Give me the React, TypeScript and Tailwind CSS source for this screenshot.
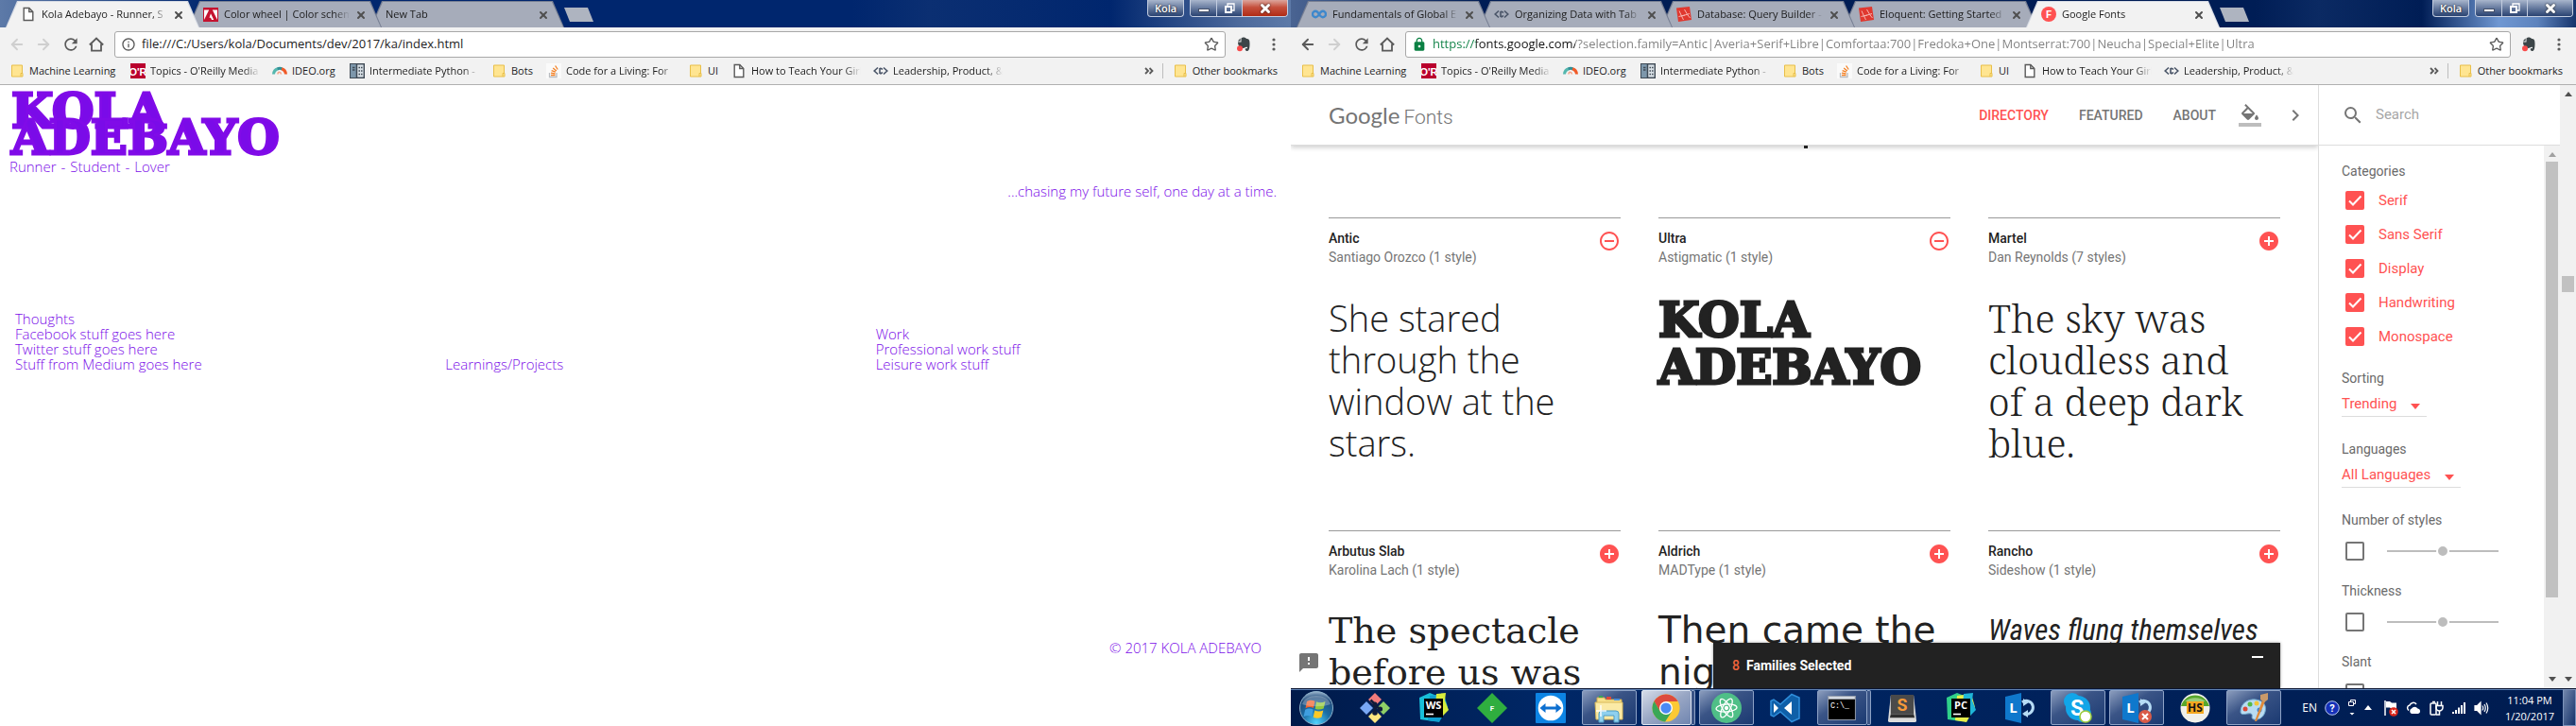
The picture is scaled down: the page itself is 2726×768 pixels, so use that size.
import type { ReactNode } from "react";
import { ArrowLeft, ArrowRight, Star, X } from "lucide-react";
import { MdAddCircle, MdChevronRight, MdFeedback, MdFormatColorFill, MdHttps, MdInfoOutline, MdRefresh, MdRemoveCircleOutline, MdSearch } from "react-icons/md";

/* ---------- favicons and small glyphs ---------- */

const PageIcon = () => (
  <svg viewBox="0 0 16 16" className="size-4 shrink-0" fill="#fff" stroke="#5a5a5a" strokeWidth="1.4">
    <path d="M3.2 1.5h5.6l4 4v9H3.2z" />
    <path d="M8.8 1.5v4h4" fill="none" />
  </svg>
);

const FolderIcon = () => (
  <svg viewBox="0 0 16 16" className="size-4 shrink-0">
    <path d="M2.5 2h11v8.500h.5v3.500H2.500z" fill="#ffe591" stroke="#e8bf4a" />
    <path d="M12 14v-3.500h2" fill="none" stroke="#e8bf4a" />
  </svg>
);

const AdobeIcon = () => (
  <svg viewBox="0 0 16 16" className="size-4 shrink-0">
    <rect width="16" height="16" y="1" fill="#c4122f" />
    <path d="M6.200 3.500H1V14zM9.800 3.500H15V14zM8 7.200l3.200 6.800H9l-1-2.200H6.500z" fill="#fff" />
  </svg>
);

const OreillyIcon = () => (
  <svg viewBox="0 0 16 16" className="size-4 shrink-0">
    <rect width="16" height="16" fill="#b9002d" />
    <text x="8" y="12.500" textAnchor="middle" fontFamily="Liberation Sans" fontSize="11" fontWeight="700" fill="#fff">O'R</text>
  </svg>
);

const IdeoIcon = () => (
  <svg viewBox="0 0 16 16" className="size-4 shrink-0" fill="none" strokeWidth="3">
    <path d="M1.500 11.500A6.500 6.500 0 0 1 6 5.700" stroke="#55b7ae" />
    <path d="M5.600 5.800A6.500 6.500 0 0 1 10.500 5.800" stroke="#2f8f96" />
    <path d="M10 5.700a6.500 6.500 0 0 1 4.500 5.800" stroke="#f05a28" />
    <path d="M6 11.500c0-3 3-3 3.500 0" stroke="#f6a489" strokeWidth="1.500" />
  </svg>
);

const LibraryIcon = () => (
  <svg viewBox="0 0 16 16" className="size-4 shrink-0">
    <rect x=".7" y=".7" width="14.600" height="14.600" fill="#d8e0e6" stroke="#3f4a55" strokeWidth="1.400" />
    <rect x="1" y="1" width="6" height="14" fill="#7d97ab" />
    <path d="M7.500 1v14M3 4.500h2.500M3 7h2.500M9.500 4.500h1.500M12 4.500h1.500M9.500 8h1.500M12 8h1.500M9.500 11.500h1.500M12 11.500h1.500" stroke="#3f4a55" strokeWidth="1.500" />
  </svg>
);

const StackIcon = () => (
  <svg viewBox="0 0 16 16" className="size-4 shrink-0" fill="none">
    <rect width="16" height="16" fill="#fafafa" />
    <path d="M3.500 10v4.500h7.500V10" stroke="#b9bcc0" strokeWidth="1.300" />
    <path d="M5 12.500h4.500M5 10.200l4.500.6M5.600 7.600l4.300 1.600M7.200 5l3.600 2.900M9.600 2.500l2.600 4" stroke="#f48024" strokeWidth="1.300" />
  </svg>
);

const CodeIcon = () => (
  <svg viewBox="0 0 16 16" className="size-4 shrink-0" fill="none" stroke="#4a5568" strokeWidth="1.600">
    <path d="M5 4.500 1.200 8 5 11.500M11 4.500 14.800 8 11 11.500" />
    <path d="M7 5v6M7 5.200q2.500 0 2.500 1.500M7 10.800q2.500 0 2.500-1.500" />
  </svg>
);

const InfinityIcon = () => (
  <svg viewBox="0 0 16 16" className="size-4 shrink-0" fill="none" stroke="#3e88cc" strokeWidth="2.400">
    <path d="M8 8C6.500 5.500 5.500 4.800 4.200 4.800a3.200 3.200 0 0 0 0 6.400C5.500 11.200 6.500 10.500 8 8s2.500-3.200 3.800-3.200a3.200 3.200 0 0 1 0 6.400C10.500 11.200 9.500 10.500 8 8z" />
  </svg>
);

const LaravelIcon = () => (
  <svg viewBox="0 0 16 16" className="size-4 shrink-0">
    <path d="M0 1.500 14 0l2 14L2 16z" fill="#e0382f" />
    <path d="M3 4.500 5.500 10 14 7.500M5.500 10l2 4M8.500 3l3.500 6 2.500 3M2.500 10.500 9 9" fill="none" stroke="#f6b3ae" />
  </svg>
);

const FontsIcon = () => (
  <svg viewBox="0 0 16 16" className="size-4 shrink-0">
    <circle cx="8" cy="8" r="8" fill="#ff5252" />
    <text x="8" y="12" textAnchor="middle" fontFamily="Roboto" fontSize="11" fontWeight="700" fill="#fff">F</text>
  </svg>
);

const HomeIcon = () => (
  <svg viewBox="0 0 18 18" className="size-[18px]" fill="none" stroke="#5a5a5a" strokeWidth="1.800">
    <path d="M1.800 9.500 9 2.500l7.200 7M4 8.500v7.200h10V8.500" />
  </svg>
);

const EvernoteIcon = () => (
  <svg viewBox="0 0 18 18" className="size-[18px]">
    <path d="M6.500 2.500C8 1 11 1.500 12 3c2.500.2 3.500 1 3.500 5 0 4-.5 8-2.500 8s-3-2-1.500-3l1.300.3c.6-1 .2-1.600-.8-1.600-1.500 0-2 1.300-3.500 1.300C5 13 3 10 3 6.500h3.500z" fill="#3c4548" />
    <path d="M2.800 5.500 5.600 2.600v2.900z" fill="#3c4548" />
    <circle cx="5" cy="13.200" r="3" fill="#f94a4a" />
  </svg>
);

const DotsIcon = () => (
  <svg viewBox="0 0 4 16" className="h-4 w-1" fill="#5a5a5a">
    <circle cx="2" cy="3" r="1.600" /><circle cx="2" cy="8" r="1.600" /><circle cx="2" cy="13" r="1.600" />
  </svg>
);

/* ---------- browser chrome ---------- */

type TabInfo = { title: string; icon?: ReactNode; active?: boolean };

function Tab({ tab, order }: { tab: TabInfo; order: number }) {
  return (
    <div
      className={
        "relative -ml-3 h-7 w-[205px] shrink-0 [clip-path:polygon(0_100%,12px_0,calc(100%_-_12px)_0,100%_100%)] " +
        (tab.active ? "bg-[#d5dae4]" : "bg-[#767e92]")
      }
      style={{ zIndex: tab.active ? 20 : order }}
    >
      <div
        className={
          "flex h-full items-center pr-[18px] pl-4 [clip-path:polygon(1px_100%,13px_1px,calc(100%_-_13px)_1px,calc(100%_-_1px)_100%)] " +
          (tab.active ? "bg-[#f2f2f2]" : "bg-[#a6acba]")
        }
      >
        {tab.icon && <span className="mr-1.5">{tab.icon}</span>}
        <span className="min-w-0 flex-1 overflow-hidden text-[11px] whitespace-nowrap text-[#1c1c1c] [mask-image:linear-gradient(to_right,black_88%,transparent)]">
          {tab.title}
        </span>
        <button aria-label={"Close " + tab.title} className="ml-1.5 grid size-[10px] place-items-center">
          <X className="size-3 shrink-0 text-[#505050]" strokeWidth={4} />
        </button>
      </div>
    </div>
  );
}

function WindowControls({ focused }: { focused: boolean }) {
  const glass = "bg-linear-to-b from-[#a9b6cc] via-[#6d80a3] via-45% to-[#2a4372] ";
  return (
    <div className="ml-auto flex h-[18px] gap-1.5 pr-[3px] text-white">
      <button className={"w-[39px] rounded-b-[4px] border border-t-0 border-[#c3cde0] text-[11px] leading-4 font-semibold [text-shadow:0_0_2px_#000] " + glass}>
        Kola
      </button>
      <div className="flex overflow-hidden rounded-b-[4px] border border-t-0 border-[#c3cde0]">
        <button aria-label="Minimize" className={"grid w-7 place-items-center border-r border-[#c3cde0] " + glass}>
          <span className="mt-1 h-1 w-3 border border-[#44506a] bg-white" />
        </button>
        <button aria-label="Restore" className={"grid w-[27px] place-items-center border-r border-[#c3cde0] " + glass}>
          <svg viewBox="0 0 12 12" className="size-3" fill="none" stroke="#fff" strokeWidth="2">
            <path d="M4 3V1h7v7H9" strokeWidth="1.300" /><path d="M2 4h6v6H2z" />
          </svg>
        </button>
        <button
          aria-label="Close"
          className={"grid w-[47px] place-items-center " + (focused ? "bg-linear-to-b from-[#dba59d] via-[#c5503d] via-45% to-[#b02a12]" : glass)}
        >
          <X className="size-[14px] text-white drop-shadow-[0_0_1px_#222]" strokeWidth={5} />
        </button>
      </div>
    </div>
  );
}

const bookmarks: { label: string; icon: ReactNode; width: string; fade?: boolean }[] = [
  { label: "Machine Learning", icon: <FolderIcon />, width: "w-[94px]" },
  { label: "Topics - O'Reilly Media", icon: <OreillyIcon />, width: "w-[116px]", fade: true },
  { label: "IDEO.org", icon: <IdeoIcon />, width: "w-12" },
  { label: "Intermediate Python - ", icon: <LibraryIcon />, width: "w-[116px]", fade: true },
  { label: "Bots", icon: <FolderIcon />, width: "w-6" },
  { label: "Code for a Living: For", icon: <StackIcon />, width: "w-[116px]", fade: true },
  { label: "UI", icon: <FolderIcon />, width: "w-3" },
  { label: "How to Teach Your Girl", icon: <PageIcon />, width: "w-[116px]", fade: true },
  { label: "Leadership, Product, &", icon: <CodeIcon />, width: "w-[116px]", fade: true },
];

type BrowserProps = {
  tabs: TabInfo[];
  focused: boolean;
  canGoBack?: boolean;
  secure?: boolean;
  url: string;
  titleBar: string;
  children: ReactNode;
};

function Browser({ tabs, focused, canGoBack, secure, url, titleBar, children }: BrowserProps) {
  return (
    <section className="flex min-h-0 flex-1 flex-col font-['Open_Sans','Noto_Sans',sans-serif]">
      <div className={"flex h-[29px] shrink-0 pl-[18px] " + titleBar}>
        <div className="isolate mt-px flex">
          {tabs.map((t, i) => <Tab key={t.title} tab={t} order={tabs.length - i} />)}
          <button aria-label="New tab" className="mt-[7px] h-[15px] w-[31px] bg-[#aeb4c0] [clip-path:polygon(0_0,25px_0,100%_100%,6px_100%)]" />
        </div>
        <WindowControls focused={focused} />
      </div>

      <div className="flex h-8 shrink-0 items-center bg-[#f2f2f2] pt-1 pl-[9px] text-[#5a5a5a]">
        <button aria-label="Back" className={"grid w-7 justify-start " + (canGoBack ? "" : "text-[#cfcfcf]")}><ArrowLeft className="size-[18px]" strokeWidth={2.500} /></button>
        <button aria-label="Forward" className="grid w-7 justify-start text-[#cfcfcf]"><ArrowRight className="size-[18px]" strokeWidth={2.500} /></button>
        <button aria-label="Reload" className="grid w-7 justify-start"><MdRefresh className="size-5" /></button>
        <button aria-label="Home" className="grid w-7 justify-start"><HomeIcon /></button>
        <label className="flex h-7 min-w-0 flex-1 items-center rounded-[3px] border border-[#a8a8a8] bg-white px-[6px]">
          {secure ? <MdHttps className="size-4 shrink-0 text-[#0b8043]" /> : <MdInfoOutline className="size-4 shrink-0" />}
          <input
            aria-label="Address"
            defaultValue={url}
            className={
              "ml-1.5 min-w-0 flex-1 text-[13px] outline-none " +
              (secure
                ? "bg-[linear-gradient(to_right,#0b8043_0_46px,#111_46px_151px,#808080_151px)] bg-clip-text text-transparent"
                : "text-[#1c1c1c]")
            }
          />
          <Star className="size-4 shrink-0" />
        </label>
        <button aria-label="Evernote" className="ml-[10px]"><EvernoteIcon /></button>
        <button aria-label="Menu" className="mr-4 ml-[21px]"><DotsIcon /></button>
      </div>

      <nav aria-label="Bookmarks" className="flex h-[29px] shrink-0 items-center gap-[13px] border-b border-[#b0b0b0] bg-[#f2f2f2] pr-[14px] pl-[10px] text-[11px] text-[#1c1c1c]">
        {bookmarks.map((b) => (
          <a key={b.label} href="#" className="flex shrink-0 items-center gap-[5px]">
            {b.icon}
            <span className={"overflow-hidden whitespace-nowrap " + b.width + (b.fade ? " [mask-image:linear-gradient(to_right,black_85%,transparent)]" : "")}>
              {b.label}
            </span>
          </a>
        ))}
        <button aria-label="More bookmarks" className="ml-auto">
          <svg viewBox="0 0 10 10" className="size-[10px]" fill="none" stroke="#5a5a5a" strokeWidth="1.800"><path d="m1 2 3 3-3 3M5.500 2l3 3-3 3" /></svg>
        </button>
        <a href="#" className="-ml-1 flex items-center gap-[5px] border-l border-[#bdbdbd] pl-[10px] whitespace-nowrap"><FolderIcon />Other bookmarks</a>
      </nav>
      {children}
    </section>
  );
}

/* ---------- personal site ---------- */

function PersonalSite() {
  return (
    <main className="flex flex-1 flex-col bg-white pt-[13px] text-[15px] leading-4 font-light text-[#7a0be8]">
      <h1 className="ml-3 w-min font-['DejaVu_Serif',serif] text-[51px] leading-7 font-bold [-webkit-text-stroke:3px_#800be8]">KOLA ADEBAYO</h1>
      <p className="mt-[9px] ml-[10px]">{"Runner\u2004-\u2004Student\u2004-\u2004Lover"}</p>
      <p className="mt-[10px] mr-[15px] text-right">...chasing my future self, one day at a time.</p>
      <div className="mt-[119px] grid grid-cols-3 items-end">
        <section className="pl-4"><h2>Thoughts</h2><p>Facebook stuff goes here</p><p>Twitter stuff goes here</p><p>Stuff from Medium goes here</p></section>
        <section className="pl-4"><h2>Learnings/Projects</h2></section>
        <section className="pl-4"><h2>Work</h2><p>Professional work stuff</p><p>Leisure work stuff</p></section>
      </div>
      <footer className="mt-auto mr-[31px] pb-[75px] text-right">© 2017 KOLA ADEBAYO</footer>
    </main>
  );
}

/* ---------- font directory ---------- */

const fonts = [
  { name: "Antic", by: "Santiago Orozco (1 style)", text: "She stared through the window at the stars.", style: "font-['Open_Sans',sans-serif] text-[38px] leading-11 font-light", picked: true },
  { name: "Ultra", by: "Astigmatic (1 style)", text: "KOLA ADEBAYO", style: "font-['DejaVu_Serif',serif] text-[50px] leading-[50px] font-bold [-webkit-text-stroke:3px_#222]", picked: true },
  { name: "Martel", by: "Dan Reynolds (7 styles)", text: "The sky was cloudless and of a deep dark blue.", style: "pr-5 font-['Noto_Serif','DejaVu_Serif',serif] text-[41px] leading-11 font-light" },
  { name: "Arbutus Slab", by: "Karolina Lach (1 style)", text: "The spectacle before us was", style: "font-['DejaVu_Serif',serif] text-[38px] leading-11" },
  { name: "Aldrich", by: "MADType (1 style)", text: "Then came the night", style: "font-['DejaVu_Sans',sans-serif] text-[39px] leading-11" },
  { name: "Rancho", by: "Sideshow (1 style)", text: "Waves flung themselves", style: "font-['Roboto_Condensed','Open_Sans_Condensed',sans-serif] text-[31px] leading-11 italic" },
];

const heading = "text-sm leading-5 font-normal text-[#6a6a6a]";

function Filter({ label }: { label: string }) {
  return (
    <fieldset className="h-[75px] shrink-0">
      <legend className={heading}>{label}</legend>
      <div className="flex items-center pt-[13px] pl-1">
        <input type="checkbox" aria-label={"Filter by " + label} className="size-5 appearance-none rounded-[2px] border-2 border-[#757575] bg-white" />
        <input
          type="range"
          aria-label={label}
          className="ml-6 h-3 w-[118px] appearance-none bg-[linear-gradient(#bdbdbd,#bdbdbd)] bg-[length:100%_2px] bg-center bg-no-repeat [&::-webkit-slider-thumb]:size-[14px] [&::-webkit-slider-thumb]:appearance-none [&::-webkit-slider-thumb]:rounded-full [&::-webkit-slider-thumb]:border-2 [&::-webkit-slider-thumb]:border-white [&::-webkit-slider-thumb]:bg-[#bdbdbd]"
        />
      </div>
    </fieldset>
  );
}

function Picker({ label, value, width }: { label: string; value: string; width: string }) {
  return (
    <label className="block h-[75px] shrink-0">
      <span className={"block " + heading}>{label}</span>
      <span className={"relative mt-[5px] block border-b border-[#dcdcdc] " + width}>
        <select className="h-[25px] w-full appearance-none text-[15px] text-[#ff5252]"><option>{value}</option></select>
        <svg viewBox="0 0 10 6" className="pointer-events-none absolute top-3 right-[7px] h-[6px] w-[10px]"><path d="M0 0h10L5 6z" fill="#ff5252" /></svg>
      </span>
    </label>
  );
}

const Arrow = ({ down, className }: { down?: boolean; className: string }) => (
  <svg viewBox="0 0 8 5" className={"h-[5px] w-2 " + className} fill="currentColor"><path d={down ? "M0 0h8L4 5z" : "M0 5h8L4 0z"} /></svg>
);

function FontDirectory() {
  return (
    <div className="flex min-h-0 flex-1 bg-white font-['Roboto',sans-serif]">
      <main className="relative min-w-0 flex-1 overflow-hidden">
        <header className="flex h-16 items-center border-b border-[#ddd] pr-3 pl-10 text-sm font-medium text-[#757575] shadow-[0_2px_5px_rgba(0,0,0,0.2)]">
          <a href="#" className="flex items-baseline gap-1 font-['Lato',sans-serif] text-2xl">
            <span className="font-normal">Google</span>
            <span className="font-['Roboto',sans-serif] text-[21px] font-light">Fonts</span>
          </a>
          <nav className="ml-auto flex items-center gap-8">
            <a href="#" className="text-[#ff5252]">DIRECTORY</a>
            <a href="#">FEATURED</a>
            <a href="#">ABOUT</a>
          </nav>
          <button aria-label="Background colour" className="ml-6">
            <svg viewBox="0 0 24 24" className="size-6">
              <MdFormatColorFill size={24} />
              <path d="M0 20h24v4H0z" fill="#bdbdbd" />
            </svg>
          </button>
          <button aria-label="More" className="ml-6"><MdChevronRight className="size-6" /></button>
        </header>
        <span className="absolute top-16 left-[543px] h-[3px] w-1 bg-[#222]" />
        <div className="grid grid-cols-3 gap-x-10 px-10 pt-[76px]">
          {fonts.map((f) => (
            <article key={f.name} className="h-[331px] border-t border-[#999] pt-[11px] text-[#222]">
              <div className="flex items-start justify-between text-sm leading-5">
                <div>
                  <h2 className="font-medium">{f.name}</h2>
                  <p className="text-[#757575]">{f.by}</p>
                </div>
                <button aria-label={(f.picked ? "Remove " : "Add ") + f.name} className="mt-px text-[#ff5252]">
                  {f.picked ? <MdRemoveCircleOutline className="size-6" /> : <MdAddCircle className="size-6" />}
                </button>
              </div>
              <p className={"mt-8 " + f.style}>{f.text}</p>
            </article>
          ))}
        </div>
        <button aria-label="Send feedback" className="absolute bottom-[15px] left-[7px] text-[#757575]"><MdFeedback className="size-6" /></button>
        <div className="absolute right-10 bottom-0 flex h-12 w-[600px] gap-[7px] bg-[#222] pl-5 text-sm leading-12 font-bold text-white shadow-[0_0_3px_rgba(0,0,0,0.4)]">
          <span className="font-medium text-[#f0643c]">8</span> Families Selected
          <button aria-label="Minimize" className="mt-[14px] mr-[18px] ml-auto h-[2px] w-3 bg-white" />
        </div>
      </main>

      <aside className="flex w-[256px] shrink-0 flex-col border-l border-[#ddd]">
        <label className="flex h-16 shrink-0 items-center border-b border-[#ddd] pl-6 text-[#757575]">
          <MdSearch className="size-6" />
          <input placeholder="Search" aria-label="Search" className="ml-3 w-40 text-[15px] outline-none placeholder:text-[#a6a6a6]" />
        </label>
        <div className="flex min-h-0 flex-1">
          <div className="flex min-w-0 flex-1 flex-col overflow-hidden pt-[17px] pl-6">
            <h2 className={heading}>Categories</h2>
            <ul className="mt-[3px] mb-4">
              {["Serif", "Sans Serif", "Display", "Handwriting", "Monospace"].map((c) => (
                <li key={c}>
                  <label className="relative flex h-9 items-center pl-1 text-[15px] text-[#ff5252]">
                    <input type="checkbox" defaultChecked className="mr-[15px] size-5 appearance-none rounded-[2px] bg-[#ff5252]" />
                    <svg viewBox="0 0 20 20" className="pointer-events-none absolute left-1 size-5" fill="none" stroke="#fff" strokeWidth="2"><path d="m4 10.500 4 4 8.500-9" /></svg>
                    {c}
                  </label>
                </li>
              ))}
            </ul>
            <Picker label="Sorting" value="Trending" width="w-[90px]" />
            <Picker label="Languages" value="All Languages" width="w-[126px]" />
            <Filter label="Number of styles" />
            <Filter label="Thickness" />
            <Filter label="Slant" />
          </div>
          <div className="flex w-[17px] flex-col items-center justify-between bg-[#f1f1f1] pt-[7px] pb-[7px]">
            <Arrow className="shrink-0 text-[#a0a0a0]" />
            <div className="mt-[5px] mb-auto h-[461px] w-[13px] shrink-0 bg-[#c1c1c1]" />
            <Arrow down className="text-[#505050]" />
          </div>
        </div>
      </aside>
      <div className="flex w-[17px] shrink-0 flex-col items-center bg-[#f1f1f1] py-[7px]">
        <Arrow className="text-[#505050]" />
        <div className="mt-[190px] h-[17px] w-[13px] bg-[#c1c1c1]" />
        <Arrow down className="mt-auto text-[#505050]" />
      </div>
    </div>
  );
}

/* ---------- taskbar ---------- */

const Orb = () => (
  <svg viewBox="0 0 38 38" className="size-[38px]">
    <defs>
      <radialGradient id="orb" cx=".5" cy=".95" r=".95"><stop offset="0" stopColor="#4fd4ff" /><stop offset=".45" stopColor="#1b6ea6" /><stop offset=".8" stopColor="#1f4c7c" /><stop offset="1" stopColor="#9fb8cf" /></radialGradient>
    </defs>
    <circle cx="19" cy="19" r="17.500" fill="url(#orb)" stroke="#8fb3cc" />
    <path d="M9 12c3-2 6-1.500 8.500-.3L16 19c-2.500-1.300-5.500-1.500-8.500.2z" fill="#f0622d" />
    <path d="M19 12.300c3 1.400 6 1.400 9.500-.3L26.700 19.500c-3 1.400-6 1.400-9 .2z" fill="#93c83e" />
    <path d="M7.200 20.700c3-1.500 6-1.500 8.500 0L14 28c-2.500-1.400-5.500-1.400-8.500.2z" fill="#3f9fe0" />
    <path d="M17.300 21.400c3 1.400 6 1.400 9 0L24.500 28.700c-3 1.400-6 1.400-8.800 0z" fill="#fcc927" />
    <path d="M4 15C7 3 31 3 34 15c-8 3-22 3-30 0z" fill="#fff" opacity=".28" />
  </svg>
);

const Git = () => (
  <svg viewBox="0 0 32 32" className="size-8">
    <path d="m16 0 7 7-7 7-7-7z" fill="#f27b7b" /><path d="m7 9 7 7-7 7-7-7z" fill="#79a8f5" />
    <path d="m25 9 7 7-7 7-7-7z" fill="#8fd067" /><path d="m16 18 7 7-7 7-7-7z" fill="#ffe680" />
    <path d="M11.500 7.500 16 12v9M16 13l5 4" stroke="#101c3a" strokeWidth="2.500" fill="none" />
    <circle cx="16" cy="12" r="2.500" fill="#101c3a" /><circle cx="16" cy="21" r="2.800" fill="#101c3a" /><circle cx="21.500" cy="17" r="2.600" fill="#101c3a" />
  </svg>
);

const JetBrains = ({ name, a, b, c }: { name: string; a: string; b: string; c: string }) => (
  <svg viewBox="0 0 32 32" className="size-8">
    <path d="M1 5 12 0l10 4-6 26-14-2z" fill={a} /><path d="M12 3 27 1l4 14-9 16-12-2z" fill={b} />
    <path d="m19 1 10-1-1 8 4 10-6 6-8-10z" fill={c} />
    <rect x="6" y="6" width="20" height="20" fill="#000" />
    <text x="16" y="16.500" textAnchor="middle" fontFamily="Open Sans" fontWeight="700" fontSize="11" fill="#fff">{name}</text>
    <path d="M8 22.500h8" stroke="#fff" strokeWidth="1.600" />
  </svg>
);

const Diamond = () => (
  <svg viewBox="0 0 32 32" className="size-8">
    <path d="m16 0 16 16-16 16L0 16z" fill="#2fae3f" />
    <text x="16" y="19" textAnchor="middle" fontFamily="Roboto" fontWeight="700" fontSize="8" fill="#fff">F</text>
  </svg>
);

const TeamViewer = () => (
  <svg viewBox="0 0 32 32" className="size-8">
    <rect width="32" height="32" rx="1" fill="#0c84e4" /><circle cx="16" cy="16" r="13.300" fill="#fff" />
    <path d="m4.500 16 6-5v3.500h11V11l6 5-6 5v-3.500h-11V21z" fill="#0c6fd0" />
  </svg>
);

const Explorer = () => (
  <svg viewBox="0 0 34 32" className="h-8 w-[34px]">
    <path d="M4 5h8l1 2h17v20H4z" fill="#f7e08a" stroke="#c9a94c" />
    <path d="M2 10h29v18H3z" fill="#fbeaa6" stroke="#d8b95a" />
    <path d="M6 3h4v2H6z" fill="#3aa655" /><path d="M14 4h5v3h-5z" fill="#e04b3a" /><path d="M22 6h6v2h-6z" fill="#4b8fd8" />
    <path d="M6 31V22q0-3 3-3h15q3 0 3 3v9h-5v-7H11v7z" fill="#8fd0ee" stroke="#4c9cc4" />
    <path d="M8 13v12M3 19h11" stroke="#fff" strokeWidth="1.500" opacity=".9" />
  </svg>
);

const Chrome = () => (
  <svg viewBox="0 0 32 32" className="size-[30px]">
    <circle cx="16" cy="16" r="15.500" fill="#fcc934" />
    <path d="M2.600 8.200A15.500 15.500 0 0 1 29.400 8.500H16L9.300 20z" fill="#dd4b3e" />
    <path d="M2.600 8.200A15.500 15.500 0 0 0 15 31.500L22.500 20 16 23.500 9.500 20z" fill="#3aa757" />
    <circle cx="16" cy="16" r="7.500" fill="#fff" /><circle cx="16" cy="16" r="6" fill="#4a8af4" />
  </svg>
);

const Atom = () => (
  <svg viewBox="0 0 32 32" className="size-8" fill="none" stroke="#fff" strokeWidth="1.300">
    <circle cx="16" cy="16" r="16" fill="#4fbf87" stroke="none" />
    <ellipse cx="16" cy="16" rx="4" ry="11" transform="rotate(28 16 16)" /><ellipse cx="16" cy="16" rx="4" ry="11" transform="rotate(-32 16 16)" />
    <ellipse cx="16" cy="16" rx="4" ry="11" transform="rotate(86 16 16)" /><circle cx="16" cy="16" r="1.500" fill="#fff" />
  </svg>
);

const VsCode = () => (
  <svg viewBox="0 0 32 32" className="size-8">
    <path d="M23 1.500 31 5v22l-8 3.500L11 20l-7 5-3-1.500v-15L4 7l7 5z" fill="#0f5fa8" stroke="#2f8fdc" strokeWidth="1.500" />
    <path d="m23 9-8 7 8 7zM4 11v10l5-5z" fill="#fff" />
  </svg>
);

const Terminal = () => (
  <svg viewBox="0 0 32 28" className="h-[26px] w-[30px]">
    <rect x=".5" y=".5" width="31" height="27" fill="#000" stroke="#9aa3b3" /><rect x="1" y="1" width="30" height="3" fill="#d5dae2" />
    <text x="3" y="14" fontFamily="Liberation Mono" fontSize="9" fill="#fff">C:\_</text>
  </svg>
);

const Sublime = () => (
  <svg viewBox="0 0 32 32" className="size-[30px]">
    <path d="M3 2h26l3 28q0 2-2 2H2q-2 0-2-2z" fill="#dcdcdc" /><path d="M3 1h26v22H3z" fill="#4a4a4a" /><path d="M3 23h26l1 4H2z" fill="#2f2f2f" />
    <text x="16" y="19" textAnchor="middle" fontFamily="Roboto" fontWeight="700" fontSize="19" fill="#f79a3a">S</text>
  </svg>
);

const Lync = ({ blocked }: { blocked?: boolean }) => (
  <svg viewBox="0 0 34 32" className="h-8 w-[34px]">
    <path d="M20 10a7 7 0 1 1 2 12" fill="none" stroke="#b7dcf5" strokeWidth="3" /><path d="m21 6 6 4-6 4zM26 18v8l-6-4z" fill="#b7dcf5" />
    <path d="M2 4 19 0v32L2 28z" fill="#0f78cc" />
    <text x="10.500" y="21" textAnchor="middle" fontFamily="Open Sans" fontWeight="700" fontSize="15" fill="#fff">L</text>
    {blocked && (<><circle cx="26" cy="25" r="7" fill="#d95b48" /><path d="m23 22 6 6m0-6-6 6" stroke="#fff" strokeWidth="2" /></>)}
  </svg>
);

const Skype = () => (
  <svg viewBox="0 0 32 32" className="size-8">
    <circle cx="10" cy="9" r="9" fill="#12a5e8" /><circle cx="16" cy="16" r="13" fill="#12a5e8" /><circle cx="21" cy="22" r="9" fill="#12a5e8" />
    <text x="15" y="24" textAnchor="middle" fontFamily="Roboto" fontWeight="700" fontSize="23" fill="#fff">S</text>
    <circle cx="24" cy="25" r="6" fill="#fff" stroke="#9ccb3c" strokeWidth="1.600" />
  </svg>
);

const HeidiSql = () => (
  <svg viewBox="0 0 32 32" className="size-8">
    <circle cx="16" cy="16" r="15.500" fill="#f0f0ea" /><path d="M1 14a15.500 15.500 0 0 1 30 0z" fill="#58a72c" /><path d="M5 9a14 10 0 0 1 22 0z" fill="#c6e6ae" opacity=".6" />
    <rect x="7" y="9" width="18" height="13" fill="#f5a81f" />
    <text x="16" y="20" textAnchor="middle" fontFamily="Open Sans" fontWeight="700" fontSize="12" fill="#141414">HS</text>
  </svg>
);

const Paint = () => (
  <svg viewBox="0 0 32 32" className="size-8">
    <path d="M2 20C2 11 10 6 18 7c8 1 12 6 10 13s-8 9-12 8 0-5-3-6-11 3-11-2z" fill="#b9dcf2" stroke="#6da4cb" />
    <circle cx="7" cy="17" r="2.500" fill="#d94a3a" /><circle cx="12" cy="12" r="2.500" fill="#54b948" /><circle cx="19" cy="11" r="2.500" fill="#f3c63a" /><circle cx="22" cy="18" r="2.500" fill="#3b82d0" />
    <path d="m17 30 8-22 3 1-9 21z" fill="#e08a3a" /><path d="m23 2 8-2 0 7-4 3-4-3z" fill="#c99a6a" />
  </svg>
);

const apps: { name: string; icon: ReactNode; open?: boolean; front?: boolean; stacked?: boolean }[] = [
  { name: "Git", icon: <Git /> },
  { name: "WebStorm", icon: <JetBrains name="WS" a="#18bfd8" b="#0f9fd0" c="#d8ec3c" /> },
  { name: "Fiddler", icon: <Diamond /> },
  { name: "TeamViewer", icon: <TeamViewer /> },
  { name: "Explorer", icon: <Explorer />, open: true },
  { name: "Chrome", icon: <Chrome />, open: true, front: true, stacked: true },
  { name: "Atom", icon: <Atom />, open: true },
  { name: "Visual Studio Code", icon: <VsCode /> },
  { name: "Command Prompt", icon: <Terminal />, open: true, stacked: true },
  { name: "Sublime Text", icon: <Sublime /> },
  { name: "PyCharm", icon: <JetBrains name="PC" a="#2fd08a" b="#e6ee4a" c="#1fb6d8" /> },
  { name: "Lync", icon: <Lync /> },
  { name: "Skype", icon: <Skype />, open: true },
  { name: "Lync, signed out", icon: <Lync blocked />, open: true },
  { name: "HeidiSQL", icon: <HeidiSql /> },
  { name: "Paint", icon: <Paint />, open: true },
];

function Taskbar() {
  return (
    <footer className="flex h-10 shrink-0 items-stretch border-t border-[#0a1430] bg-linear-to-r from-[#001a4a] via-[#002766] via-20% to-[#001c50] font-['Open_Sans',sans-serif] text-white shadow-[inset_0_1px_0_#5f82b5]">
      <button aria-label="Start" className="grid w-[58px] place-items-center pr-1"><Orb /></button>
      {apps.map((a) => (
        <div key={a.name} className="flex w-[62px] items-stretch justify-center pt-px pb-px">
          <button
            aria-label={a.name}
            className={
              "grid place-items-center rounded-[2px] " +
              (a.stacked ? "w-[53px] " : "w-[58px] ") +
              (a.front
                ? "border border-[#dfe6f2] bg-linear-to-br from-[#d5dbe8] via-[#98a6c4] to-[#7186b0]"
                : a.open
                  ? "border border-[#8ea3c6] bg-linear-to-br from-[#8c9dbd] via-[#3a5486] via-40% to-[#1b3a72]"
                  : "")
            }
          >
            {a.icon}
          </button>
          {a.stacked && <span className="w-1 rounded-r-[2px] border border-l-0 border-[#8ea3c6] bg-[#3a5486]" />}
        </div>
      ))}
      <div className="ml-auto flex items-center gap-2">
        <span className="text-xs">EN</span>
        <svg viewBox="0 0 16 16" className="size-4"><circle cx="8" cy="8" r="7.300" fill="#1530b8" stroke="#b9c8f0" /><text x="8" y="12" textAnchor="middle" fontFamily="Roboto" fontWeight="700" fontSize="11" fill="#fff">?</text></svg>
        <svg viewBox="0 0 10 20" className="h-5 w-[10px]" fill="none" stroke="#fff"><path d="M3.500 3V1.500h5v4H7M1.500 3.500h5v4h-5z" /><path d="M2.500 15h5L5 17.500z" fill="#fff" stroke="none" /></svg>
        <Arrow className="mr-1" />
        <svg viewBox="0 0 16 18" className="h-[18px] w-4"><path d="M2 1v16" stroke="#fff" strokeWidth="1.500" /><path d="M3 2h4l2 1.500h5V10H9L7 8.500H3z" fill="#fff" /><circle cx="11" cy="13" r="4.800" fill="#d8261c" /><path d="m9 11 4 4m0-4-4 4" stroke="#fff" strokeWidth="1.500" /></svg>
        <svg viewBox="0 0 16 14" className="h-[14px] w-4"><path d="M3 9.500A3 3 0 0 1 4 4a4 4 0 0 1 7-1" fill="none" stroke="#fff" strokeWidth="1.500" /><path d="M6 13a3 3 0 0 1 0-5.500 4 4 0 0 1 6.500 0A2.800 2.800 0 0 1 13 13z" fill="#fff" /></svg>
        <svg viewBox="0 0 16 16" className="size-4" fill="none" stroke="#fff" strokeWidth="1.500"><rect x="2" y="3" width="6" height="12" rx="1" /><path d="M4 1.500h3M9.500 1v4M13.500 1v4M8 5.500h7v2a3.500 3.500 0 0 1-7 0zM11.500 11v4H8" /></svg>
        <svg viewBox="0 0 16 16" className="size-4" fill="#fff"><path d="M1 12h2v2H1zM4 10h2v4H4zM7 7.500h2V14H7zM10 5h2v9h-2zM13 2h2v12h-2z" /></svg>
        <svg viewBox="0 0 16 16" className="size-4" fill="none" stroke="#fff" strokeWidth="1.200"><path d="M1 5.500h2.500L7 2v12L3.500 10.500H1z" fill="#fff" /><path d="M9 5.500q1.500 2.500 0 5M11 4q2.500 4 0 8M13 2.500q3.500 5.500 0 11" /></svg>
        <time className="w-[70px] text-center text-[11px] leading-[17px] whitespace-nowrap">11:04 PM<br />1/20/2017</time>
      </div>
      <button aria-label="Show desktop" className="w-[14px] border border-[#7c93bb] bg-linear-to-br from-[#7286ab] to-[#16326a]" />
    </footer>
  );
}

export default function App() {
  return (
    <div className="flex h-screen overflow-hidden bg-white">
      <div className="flex min-w-0 flex-[1366] flex-col">
        <Browser
          focused
          url="file:///C:/Users/kola/Documents/dev/2017/ka/index.html"
          titleBar="bg-[linear-gradient(to_right,#5d7aa8_0,#00266e_220px,#00266e_66%,#0b2f72_72%,#00266e_86%,#4d6a9c_96%,#5d7aa8)]"
          tabs={[
            { title: "Kola Adebayo - Runner, S", icon: <PageIcon />, active: true },
            { title: "Color wheel | Color schemes", icon: <AdobeIcon /> },
            { title: "New Tab" },
          ]}
        >
          <PersonalSite />
        </Browser>
      </div>
      <div className="flex min-w-0 flex-[1360] flex-col">
        <Browser
          focused={false}
          canGoBack
          secure
          url="https://fonts.google.com/?selection.family=Antic|Averia+Serif+Libre|Comfortaa:700|Fredoka+One|Montserrat:700|Neucha|Special+Elite|Ultra"
          titleBar="bg-[linear-gradient(to_right,#4a6492_0,#001d55_200px,#001d55_75%,#0b2a63_80%,#001d55_88%,#6f97d2_94%,#5d83bd_97%,#16346c)]"
          tabs={[
            { title: "Fundamentals of Global E", icon: <InfinityIcon /> },
            { title: "Organizing Data with Tab", icon: <CodeIcon /> },
            { title: "Database: Query Builder -", icon: <LaravelIcon /> },
            { title: "Eloquent: Getting Started", icon: <LaravelIcon /> },
            { title: "Google Fonts", icon: <FontsIcon />, active: true },
          ]}
        >
          <FontDirectory />
        </Browser>
        <Taskbar />
      </div>
    </div>
  );
}
